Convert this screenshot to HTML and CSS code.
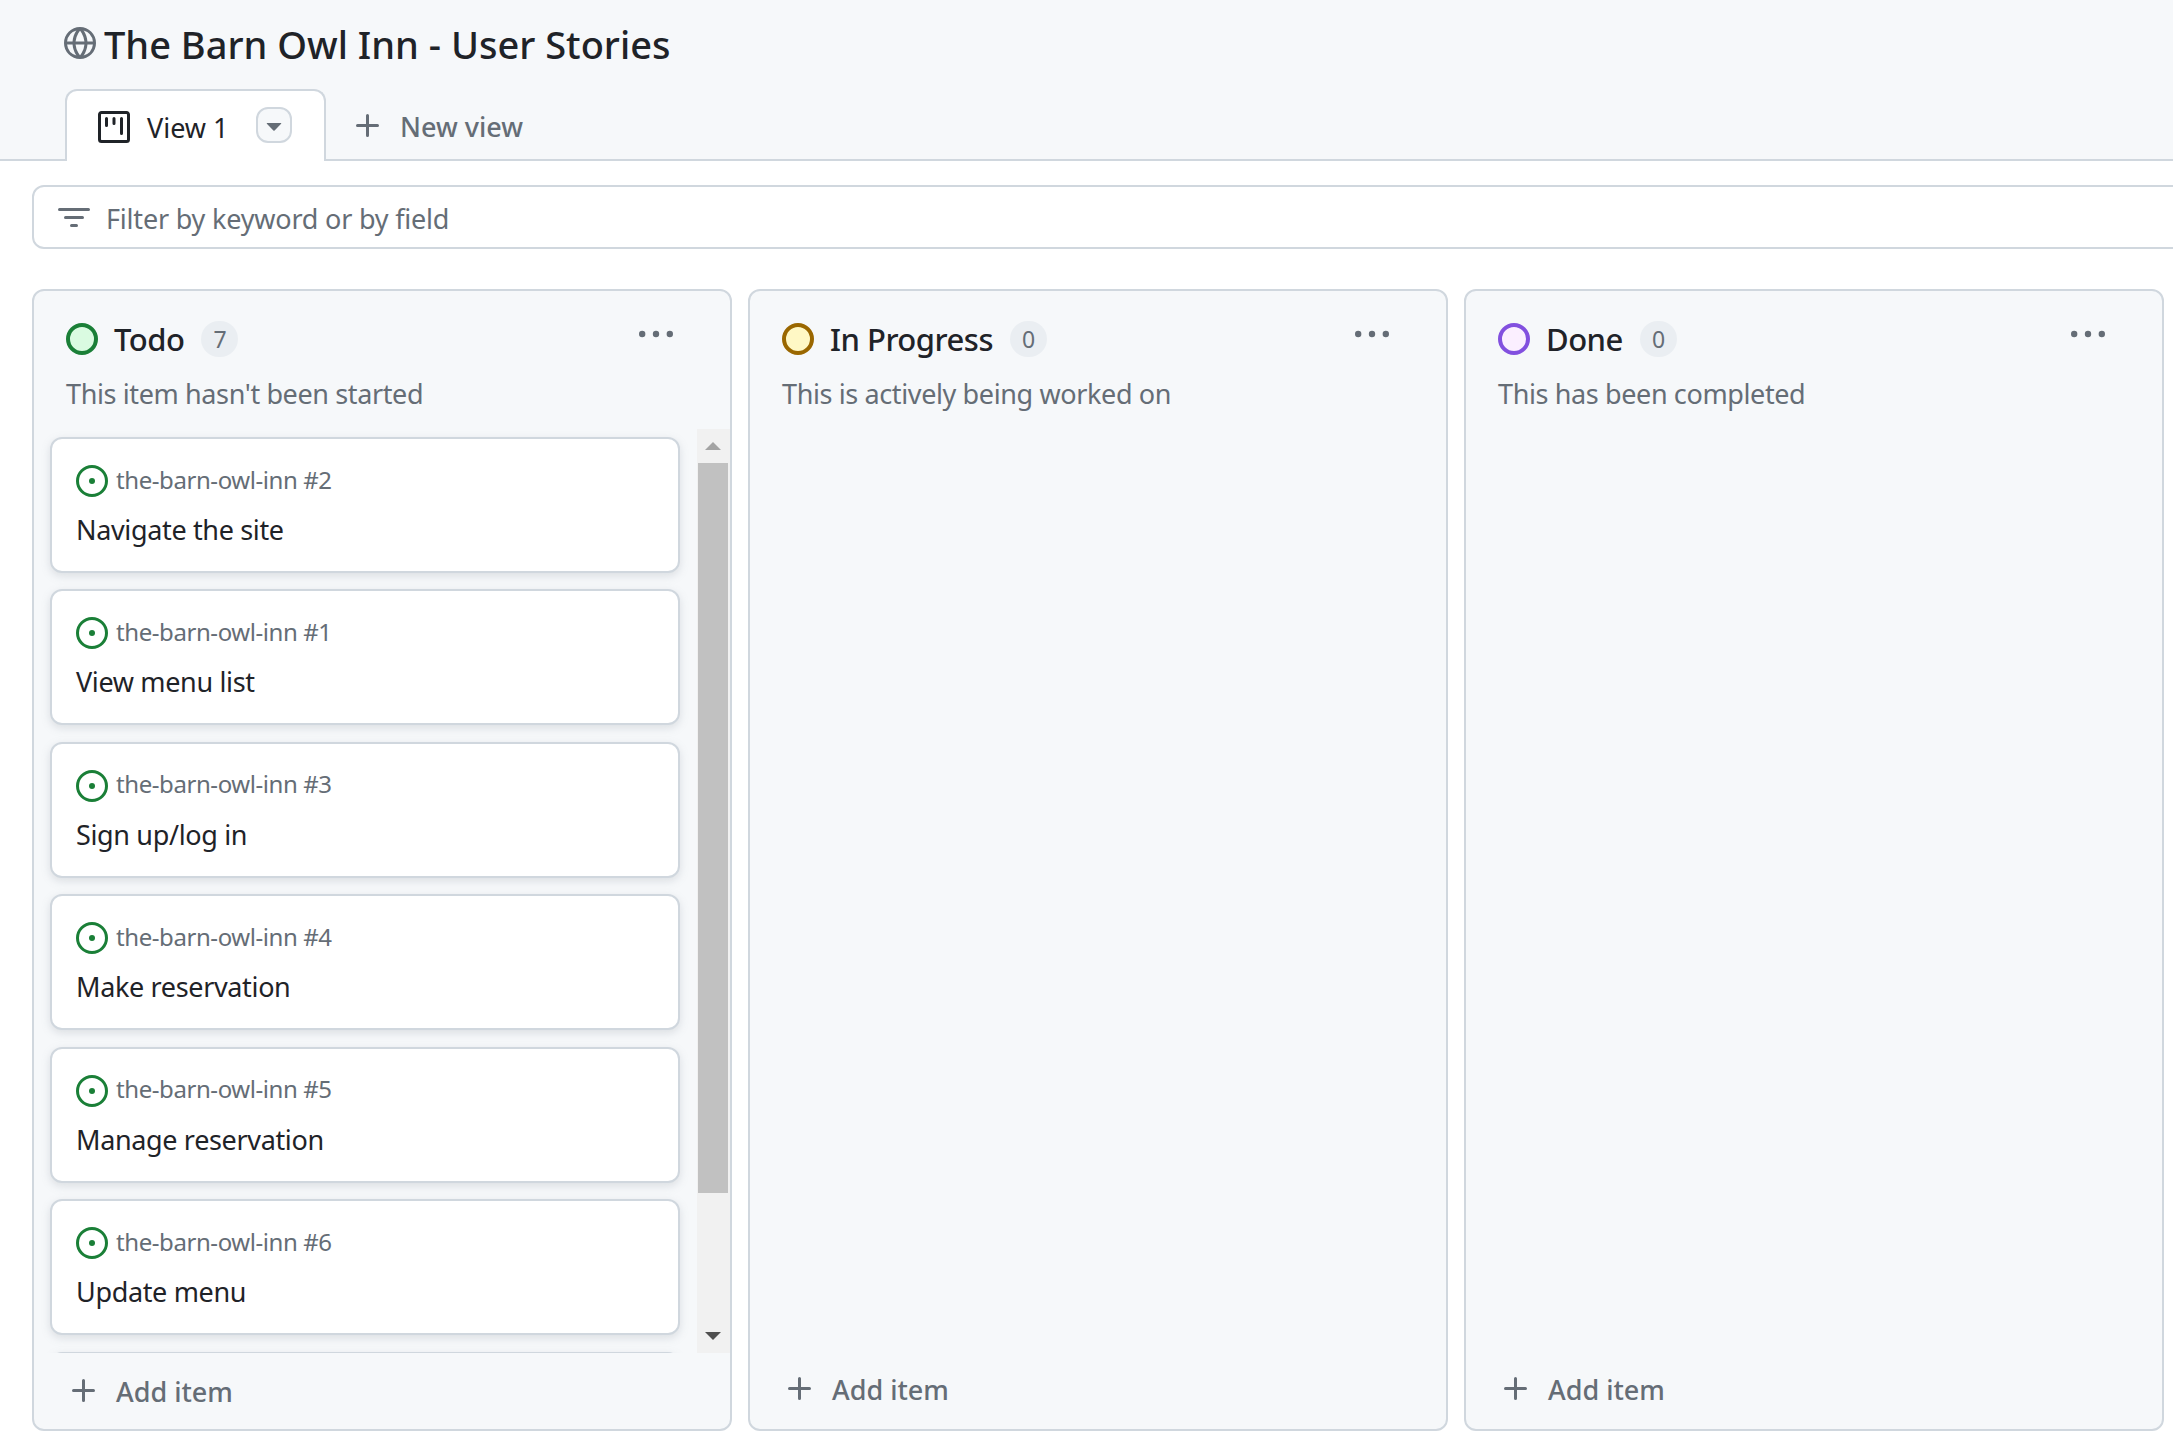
FILE: index.html
```html
<!DOCTYPE html>
<html lang="en">
<head>
<meta charset="utf-8">
<title>The Barn Owl Inn - User Stories</title>
<link rel="stylesheet" href="styles.css">
</head>
<body>
<svg class="defs" aria-hidden="true">
  <symbol id="i-globe" viewBox="0 0 16 16"><path d="M8 0a8 8 0 1 1 0 16A8 8 0 0 1 8 0ZM5.78 8.75a9.64 9.64 0 0 0 1.363 4.177c.255.426.542.832.857 1.215.245-.296.551-.705.857-1.215A9.64 9.64 0 0 0 10.22 8.75Zm4.44-1.5a9.64 9.64 0 0 0-1.363-4.177c-.307-.51-.612-.919-.857-1.215a9.927 9.927 0 0 0-.857 1.215A9.64 9.64 0 0 0 5.78 7.25Zm-5.944 1.5H1.543a6.507 6.507 0 0 0 4.666 5.5c-.123-.181-.24-.365-.352-.552-.715-1.192-1.437-2.874-1.581-4.948Zm-2.733-1.5h2.733c.144-2.074.866-3.756 1.58-4.948.12-.197.237-.381.353-.552a6.507 6.507 0 0 0-4.666 5.5Zm10.181 1.5c-.144 2.074-.866 3.756-1.58 4.948-.12.197-.237.381-.353.552a6.507 6.507 0 0 0 4.666-5.5Zm2.733-1.5a6.507 6.507 0 0 0-4.666-5.5c.123.181.24.365.353.552.714 1.192 1.436 2.874 1.58 4.948Z"/></symbol>
  <symbol id="i-project" viewBox="0 0 16 16"><path d="M1.75 0h12.5C15.216 0 16 .784 16 1.75v12.5A1.75 1.75 0 0 1 14.25 16H1.75A1.75 1.75 0 0 1 0 14.25V1.75C0 .784.784 0 1.75 0ZM1.5 1.75v12.5c0 .138.112.25.25.25h12.5a.25.25 0 0 0 .25-.25V1.75a.25.25 0 0 0-.25-.25H1.75a.25.25 0 0 0-.25.25ZM11.75 3a.75.75 0 0 1 .75.75v7.5a.75.75 0 0 1-1.5 0v-7.5a.75.75 0 0 1 .75-.75Zm-8.25.75a.75.75 0 0 1 1.5 0v3.5a.75.75 0 0 1-1.5 0ZM8 3a.75.75 0 0 1 .75.75v2.5a.75.75 0 0 1-1.5 0v-2.5A.75.75 0 0 1 8 3Z"/></symbol>
  <symbol id="i-issue" viewBox="0 0 16 16"><path d="M8 9.5a1.5 1.5 0 1 0 0-3 1.5 1.5 0 0 0 0 3Z"/><path d="M8 0a8 8 0 1 1 0 16A8 8 0 0 1 8 0ZM1.5 8a6.5 6.5 0 1 0 13 0 6.5 6.5 0 0 0-13 0Z"/></symbol>
  <symbol id="i-plus" viewBox="0 0 16 16"><path d="M7.75 2a.75.75 0 0 1 .75.75V7h4.25a.75.75 0 0 1 0 1.5H8.5v4.25a.75.75 0 0 1-1.5 0V8.5H2.75a.75.75 0 0 1 0-1.5H7V2.75A.75.75 0 0 1 7.75 2Z"/></symbol>
  <symbol id="i-filter" viewBox="0 0 16 16"><path d="M.75 3h14.5a.75.75 0 0 1 0 1.5H.75a.75.75 0 0 1 0-1.5ZM3 7.75A.75.75 0 0 1 3.75 7h8.5a.75.75 0 0 1 0 1.5h-8.5A.75.75 0 0 1 3 7.75Zm3 4a.75.75 0 0 1 .75-.75h2.5a.75.75 0 0 1 0 1.5h-2.5a.75.75 0 0 1-.75-.75Z"/></symbol>
  <symbol id="i-caret" viewBox="0 0 16 16"><path d="m4.427 7.427 3.396 3.396a.25.25 0 0 0 .354 0l3.396-3.396A.25.25 0 0 0 11.396 7H4.604a.25.25 0 0 0-.177.427Z"/></symbol>
  <symbol id="i-kebab" viewBox="0 0 16 16"><path d="M8 9a1.5 1.5 0 1 0 0-3 1.5 1.5 0 0 0 0 3ZM1.5 9a1.5 1.5 0 1 0 0-3 1.5 1.5 0 0 0 0 3Zm13 0a1.5 1.5 0 1 0 0-3 1.5 1.5 0 0 0 0 3Z"/></symbol>
</svg>

<header class="page-head">
  <div class="title-row">
    <svg class="icon icon-muted"><use href="#i-globe"/></svg>
    <h1 class="title">The Barn Owl Inn - User Stories</h1>
  </div>
  <nav class="tabs">
    <div class="tab">
      <svg class="icon icon-dark"><use href="#i-project"/></svg>
      <span class="tab-label">View 1</span>
      <span class="tab-caret"><svg class="icon icon-muted"><use href="#i-caret"/></svg></span>
    </div>
    <div class="new-view">
      <svg class="icon icon-muted"><use href="#i-plus"/></svg>
      <span>New view</span>
    </div>
  </nav>
</header>

<main class="content">
  <div class="filter">
    <svg class="icon icon-muted"><use href="#i-filter"/></svg>
    <span class="filter-text">Filter by keyword or by field</span>
  </div>

  <div class="board">
    <section class="column">
      <div class="col-head">
        <span class="dot dot-green"></span>
        <h2 class="col-name">Todo</h2>
        <span class="counter">7</span>
        <svg class="icon icon-muted kebab"><use href="#i-kebab"/></svg>
      </div>
      <p class="col-desc">This item hasn't been started</p>
      <div class="col-body">
        <div class="card-list">
          <article class="card"><div class="card-meta"><svg class="icon icon-green"><use href="#i-issue"/></svg><span class="card-ref">the-barn-owl-inn #2</span></div><div class="card-title">Navigate the site</div></article>
          <article class="card"><div class="card-meta"><svg class="icon icon-green"><use href="#i-issue"/></svg><span class="card-ref">the-barn-owl-inn #1</span></div><div class="card-title">View menu list</div></article>
          <article class="card"><div class="card-meta"><svg class="icon icon-green"><use href="#i-issue"/></svg><span class="card-ref">the-barn-owl-inn #3</span></div><div class="card-title">Sign up/log in</div></article>
          <article class="card"><div class="card-meta"><svg class="icon icon-green"><use href="#i-issue"/></svg><span class="card-ref">the-barn-owl-inn #4</span></div><div class="card-title">Make reservation</div></article>
          <article class="card"><div class="card-meta"><svg class="icon icon-green"><use href="#i-issue"/></svg><span class="card-ref">the-barn-owl-inn #5</span></div><div class="card-title">Manage reservation</div></article>
          <article class="card"><div class="card-meta"><svg class="icon icon-green"><use href="#i-issue"/></svg><span class="card-ref">the-barn-owl-inn #6</span></div><div class="card-title">Update menu</div></article>
          <article class="card"></article>
        </div>
        <div class="scrollbar">
          <span class="sb-btn"><i class="sb-up"></i></span>
          <span class="sb-thumb"></span>
          <span class="sb-btn"><i class="sb-down"></i></span>
        </div>
      </div>
      <div class="add-item add-item-first"><svg class="icon icon-muted"><use href="#i-plus"/></svg><span>Add item</span></div>
    </section>

    <section class="column">
      <div class="col-head">
        <span class="dot dot-yellow"></span>
        <h2 class="col-name">In Progress</h2>
        <span class="counter">0</span>
        <svg class="icon icon-muted kebab"><use href="#i-kebab"/></svg>
      </div>
      <p class="col-desc">This is actively being worked on</p>
      <div class="col-body"></div>
      <div class="add-item"><svg class="icon icon-muted"><use href="#i-plus"/></svg><span>Add item</span></div>
    </section>

    <section class="column">
      <div class="col-head">
        <span class="dot dot-purple"></span>
        <h2 class="col-name">Done</h2>
        <span class="counter">0</span>
        <svg class="icon icon-muted kebab"><use href="#i-kebab"/></svg>
      </div>
      <p class="col-desc">This has been completed</p>
      <div class="col-body"></div>
      <div class="add-item"><svg class="icon icon-muted"><use href="#i-plus"/></svg><span>Add item</span></div>
    </section>
  </div>
</main>
</body>
</html>
```

FILE: styles.css
```css
* { box-sizing: border-box; }
html, body { margin: 0; height: 100%; }
body {
  width: 2173px;
  height: 1442px;
  overflow: hidden;
  background: #fff;
  color: #1f2328;
  font-family: "Noto Sans", "Open Sans", sans-serif;
  font-size: 27px;
  letter-spacing: -0.3px;
}
.defs { display: none; }
.icon { width: 32px; height: 32px; flex: none; fill: currentColor; display: block; }
.icon-muted { color: #656d76; }
.icon-dark { color: #1f2328; }
.icon-green { color: #1a7f37; }

.page-head {
  height: 161px;
  background: #f6f8fa;
  border-bottom: 2px solid #d0d7de;
  padding: 27px 0 0 64px;
}
.title-row { display: flex; align-items: center; gap: 8px; height: 32px; }
.title { margin: 0; padding-top: 2px; font-size: 38px; font-weight: 500; line-height: 32px; letter-spacing: 0; }
.tabs { display: flex; margin: 30px 0 0 1px; height: 72px; }
.tab {
  width: 261px;
  height: 72px;
  background: #fff;
  border: 2px solid #d0d7de;
  border-bottom: 0;
  border-radius: 12px 12px 0 0;
  display: flex;
  align-items: center;
  padding: 2px 0 0 31px;
  position: relative;
  z-index: 1;
}
.tab-label { margin-left: 17px; width: 109px; white-space: nowrap; letter-spacing: 0; }
.tab-caret {
  width: 36px; height: 36px;
  margin-top: -4px;
  border: 2px solid #d0d7de;
  border-radius: 12px;
  background: #f6f8fa;
  display: flex; align-items: center; justify-content: center;
}
.new-view { display: flex; align-items: center; gap: 16px; padding: 2px 0 0 26px; color: #656d76; font-weight: 500; letter-spacing: 0; }

.content { padding: 24px 0 0 32px; }
.filter {
  width: 2200px;
  height: 64px;
  border: 2px solid #d0d7de;
  border-radius: 12px;
  display: flex;
  align-items: center;
  gap: 16px;
  padding: 2px 0 0 24px;
  color: #656d76;
  letter-spacing: -0.2px;
}
.board { display: flex; gap: 16.5px; margin-top: 40px; }
.column {
  flex: 0 0 699.5px;
  height: 1142px;
  background: #f6f8fa;
  border: 2px solid #d0d7de;
  border-radius: 12px;
  display: flex;
  flex-direction: column;
}
.col-head { display: flex; align-items: center; height: 36px; margin: 30px 0 0; padding: 0 32px; position: relative; }
.dot { width: 32px; height: 32px; border-radius: 50%; border: 4px solid; flex: none; }
.dot-green { border-color: #1a7f37; background: #dafbe1; }
.dot-yellow { border-color: #9a6700; background: #fff8c5; }
.dot-purple { border-color: #8250df; background: #fbefff; }
.col-name { margin: 0 17px 0 16px; font-size: 31px; font-weight: 500; line-height: 36px; letter-spacing: -0.5px; }
.counter {
  min-width: 37px; height: 36px;
  border-radius: 18px;
  background: #eaeef2;
  color: #656d76;
  font-size: 23px;
  text-align: center;
  line-height: 36px;
}
.kebab { position: absolute; right: 57px; top: -3px; width: 34px; height: 34px; }
.col-desc { margin: 17px 0 0; padding: 0 32px; color: #656d76; line-height: 40px; height: 40px; letter-spacing: -0.38px; }
.col-body { flex: 1; display: flex; min-height: 0; margin-top: 15px; overflow: hidden; }
.card-list {
  flex: 1;
  min-width: 0;
  padding: 8px 17px 0 16px;
  display: flex;
  flex-direction: column;
  gap: 16.45px;
  overflow: hidden;
}
.card {
  flex: 0 0 136px;
  background: #fff;
  border: 2px solid #d0d7de;
  border-radius: 12px;
  box-shadow: 0 3px 8px rgba(140, 149, 159, .25);
  padding: 26px 24px 0;
}
.card-meta { display: flex; align-items: center; gap: 8px; height: 32px; font-size: 24px; color: #656d76; letter-spacing: -0.42px; }
.card-ref { padding-bottom: 4px; }
.card-title { margin-top: 13px; line-height: 40px; white-space: nowrap; letter-spacing: -0.35px; }
.scrollbar { flex: 0 0 33px; background: #f1f1f1; display: flex; flex-direction: column; align-items: center; }
.sb-btn { height: 34px; width: 100%; flex: none; display: flex; align-items: center; justify-content: center; }
.sb-thumb { width: 30px; height: 730px; background: #c1c1c1; margin-bottom: auto; }
.sb-up { width: 0; height: 0; border: solid transparent; border-width: 0 8px 8px; border-bottom-color: #a3a3a3; }
.sb-down { width: 0; height: 0; border: solid transparent; border-width: 8px 8px 0; border-top-color: #505050; }
.add-item {
  flex: 0 0 76px;
  display: flex;
  align-items: center;
  gap: 16px;
  padding: 0 0 4px 34px;
  color: #656d76;
  font-weight: 500;
  letter-spacing: 0;
}
.add-item-first { padding-bottom: 0; }
```
